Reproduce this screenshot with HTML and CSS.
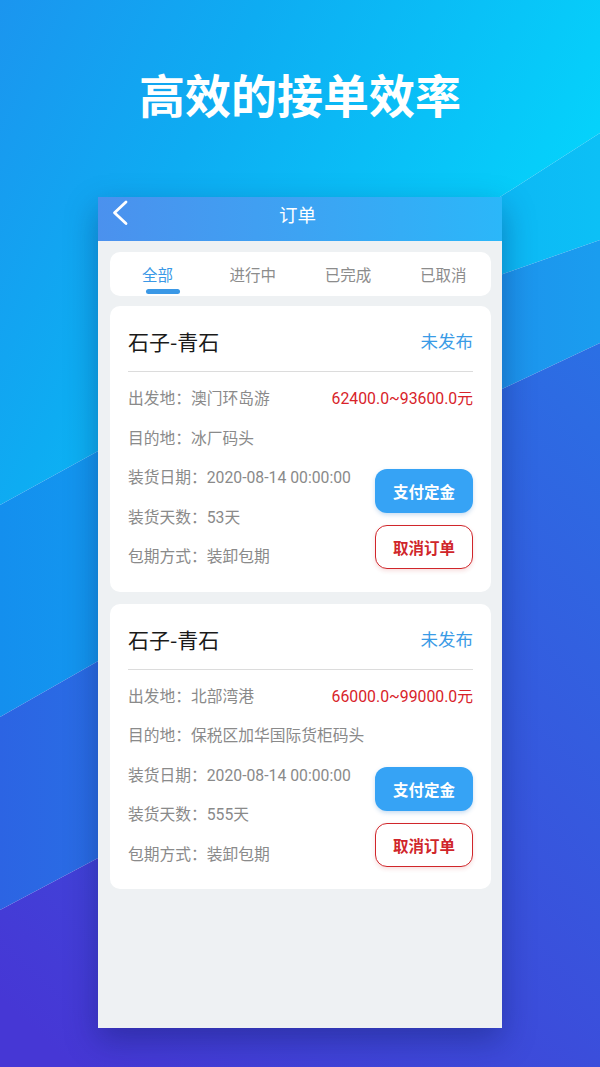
FILE: index.html
```html
<!DOCTYPE html>
<html lang="zh-CN">
<head>
<meta charset="utf-8">
<title>订单</title>
<link rel="stylesheet" href="styles.css">
</head>
<body>
<div class="screen">
  <svg class="bg" width="600" height="1067" viewBox="0 0 600 1067" xmlns="http://www.w3.org/2000/svg">
    <defs>
      <linearGradient id="g0" gradientUnits="userSpaceOnUse" x1="0" y1="0" x2="600" y2="300">
        <stop offset="0" stop-color="#1b95ef"/>
        <stop offset="0.35" stop-color="#0eacf2"/>
        <stop offset="1" stop-color="#03dafd"/>
      </linearGradient>
      <linearGradient id="g1" gradientUnits="userSpaceOnUse" x1="0" y1="0" x2="600" y2="0">
        <stop offset="0" stop-color="#148fee"/>
        <stop offset="1" stop-color="#0cc0f6"/>
      </linearGradient>
      <linearGradient id="g2" gradientUnits="userSpaceOnUse" x1="0" y1="0" x2="600" y2="0">
        <stop offset="0" stop-color="#2c64e3"/>
        <stop offset="1" stop-color="#1a9def"/>
      </linearGradient>
      <linearGradient id="g3" gradientUnits="userSpaceOnUse" x1="0" y1="1000" x2="600" y2="350">
        <stop offset="0" stop-color="#4637d5"/>
        <stop offset="1" stop-color="#2b6fe4"/>
      </linearGradient>
    </defs>
    <polygon fill="url(#g0)" points="0,0 600,0 600,133 500,197 100,450 0,505"/>
    <polygon fill="url(#g1)" points="0,505 100,450 500,197 600,133 600,240 500,275 100,660 0,717"/>
    <polygon fill="url(#g2)" points="0,717 100,660 500,275 600,240 600,343 500,390 100,857 0,910"/>
    <polygon fill="url(#g3)" points="0,910 100,857 500,390 600,343 600,1067 0,1067"/>
  </svg>

  <h1 class="headline">高效的接单效率</h1>

  <div class="phone">
    <div class="topbar">
      <svg class="back" width="40" height="34" viewBox="0 0 40 34" xmlns="http://www.w3.org/2000/svg">
        <polyline points="28,5 16.5,15.7 28,26.5" fill="none" stroke="#ffffff" stroke-width="2.8" stroke-linecap="round" stroke-linejoin="round"/>
      </svg>
      <div class="topbar-title">订单</div>
    </div>

    <div class="content">
      <div class="tabs">
        <div class="tab active"><span class="tab-text">全部</span><span class="tab-line"></span></div>
        <div class="tab"><span class="tab-text">进行中</span><span class="tab-line"></span></div>
        <div class="tab"><span class="tab-text">已完成</span><span class="tab-line"></span></div>
        <div class="tab"><span class="tab-text">已取消</span><span class="tab-line"></span></div>
      </div>

      <div class="card">
        <div class="card-head">
          <div class="card-title">石子-青石</div>
          <div class="card-status">未发布</div>
        </div>
        <div class="card-body">
          <div class="row r1">出发地：澳门环岛游</div>
          <div class="price">62400.0~93600.0元</div>
          <div class="row r2">目的地：冰厂码头</div>
          <div class="row r3">装货日期：2020-08-14 00:00:00</div>
          <div class="row r4">装货天数：53天</div>
          <div class="row r5">包期方式：装卸包期</div>
          <div class="actions">
            <div class="btn btn-pay">支付定金</div>
            <div class="btn btn-cancel">取消订单</div>
          </div>
        </div>
      </div>

      <div class="card">
        <div class="card-head">
          <div class="card-title">石子-青石</div>
          <div class="card-status">未发布</div>
        </div>
        <div class="card-body">
          <div class="row r1">出发地：北部湾港</div>
          <div class="price">66000.0~99000.0元</div>
          <div class="row r2">目的地：保税区加华国际货柜码头</div>
          <div class="row r3">装货日期：2020-08-14 00:00:00</div>
          <div class="row r4">装货天数：555天</div>
          <div class="row r5">包期方式：装卸包期</div>
          <div class="actions">
            <div class="btn btn-pay">支付定金</div>
            <div class="btn btn-cancel">取消订单</div>
          </div>
        </div>
      </div>
    </div>
  </div>
</div>
</body>
</html>
```

FILE: styles.css
```css
* { box-sizing: border-box; }

html, body {
  margin: 0;
  padding: 0;
}

body {
  width: 600px;
  height: 1067px;
  overflow: hidden;
  font-family: Roboto, "Noto Sans CJK SC", sans-serif;
}

.screen {
  position: relative;
  width: 600px;
  height: 1067px;
  overflow: hidden;
  padding-top: 65px;
  display: flex;
  flex-direction: column;
  align-items: center;
}

.bg {
  position: absolute;
  left: 0;
  top: 0;
  z-index: 0;
}

.headline {
  position: relative;
  z-index: 1;
  margin: 0;
  height: 56px;
  line-height: 56px;
  font-family: "Noto Sans CJK SC", sans-serif;
  font-size: 46px;
  font-weight: 700;
  color: #ffffff;
}

.phone {
  position: relative;
  z-index: 1;
  margin-top: 76px;
  width: 404px;
  height: 831px;
  background: #eef1f3;
  box-shadow: 0 12px 30px rgba(10, 20, 80, 0.35);
  display: flex;
  flex-direction: column;
}

.topbar {
  height: 44px;
  flex: none;
  background: linear-gradient(90deg, #4b91ee 0%, #3da3f3 50%, #2bb7f9 100%);
  display: flex;
  align-items: flex-start;
  justify-content: center;
  position: relative;
}

.back {
  position: absolute;
  left: 0;
  top: 0;
}

.topbar-title {
  line-height: 34px;
  margin-right: 5px;
  font-family: "Noto Sans CJK SC", sans-serif;
  font-size: 18.5px;
  color: #ffffff;
}

.content {
  padding: 11px 11px 0 12px;
  display: flex;
  flex-direction: column;
  gap: 12px;
}

.tabs {
  height: 44px;
  background: #ffffff;
  border-radius: 10px;
  display: grid;
  grid-template-columns: repeat(4, 1fr);
  margin-bottom: -2px;
}

.tab {
  display: flex;
  flex-direction: column;
  align-items: center;
  padding-top: 13px;
}

.tab-text {
  line-height: 18px;
  font-family: "Noto Sans CJK SC", sans-serif;
  font-size: 15.5px;
  color: #8c8c8c;
}

.tab-line {
  margin-top: 6px;
  margin-left: 10px;
  width: 34px;
  height: 5px;
  border-radius: 3px;
}

.tab.active .tab-text { color: #3a98e6; }
.tab.active .tab-line { background: #3a98e6; }

.card {
  background: #ffffff;
  border-radius: 10px;
  padding: 0 18px 16px 18px;
}

.card-head {
  display: flex;
  justify-content: space-between;
  align-items: center;
  padding: 22px 0 17px 0;
  border-bottom: 1px solid #dcdcdc;
}

.card-title {
  line-height: 26px;
  font-family: "Noto Sans CJK SC", sans-serif;
  font-size: 21px;
  color: #1a1a1a;
}

.card-status {
  line-height: 26px;
  font-family: "Noto Sans CJK SC", sans-serif;
  font-size: 17.5px;
  color: #3a9be6;
}

.card-body {
  padding-top: 6px;
  display: grid;
  grid-template-columns: minmax(0, 1fr) auto;
  grid-template-rows: repeat(5, 39.5px);
}

.row {
  grid-column: 1;
  display: flex;
  align-items: center;
  font-size: 15.75px;
  color: #8a8a8a;
  white-space: nowrap;
}

.r1 { grid-row: 1; }
.r2 { grid-row: 2; }
.r3 { grid-row: 3; }
.r4 { grid-row: 4; }
.r5 { grid-row: 5; }

.price {
  grid-column: 2;
  grid-row: 1;
  display: flex;
  align-items: center;
  justify-content: flex-end;
  font-size: 15.8px;
  color: #d8232a;
  white-space: nowrap;
}

.actions {
  grid-column: 2;
  grid-row: 3 / 6;
  justify-self: end;
  align-self: start;
  margin-top: 12px;
  display: flex;
  flex-direction: column;
  gap: 12px;
}

.btn {
  width: 98px;
  height: 44px;
  border-radius: 12px;
  display: flex;
  align-items: center;
  justify-content: center;
  font-family: "Noto Sans CJK SC", sans-serif;
  font-size: 15.5px;
  font-weight: 700;
}

.btn-pay {
  background: #36a3f5;
  color: #ffffff;
  box-shadow: 0 2px 4px rgba(40, 120, 200, 0.25);
}

.btn-cancel {
  background: #ffffff;
  border: 1.5px solid #d0262b;
  color: #d0262b;
  box-shadow: 0 2px 4px rgba(200, 40, 40, 0.15);
}
```
